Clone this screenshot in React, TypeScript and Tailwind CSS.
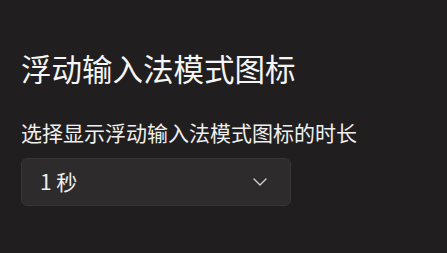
import { ChevronDown } from "lucide-react";

export default function App() {
  return (
    <div
      className="w-[447px] h-[253px] bg-[#201e1f] text-white pl-[21px] pt-[48px]"
      style={{ fontFamily: '"Noto Sans CJK SC", "Noto Sans", sans-serif' }}
    >
      <h1 className="text-[30.5px] leading-[40px] font-normal text-[#f5f5f5]">浮动输入法模式图标</h1>
      <p className="mt-[30px] text-[21px] leading-[28px] text-[#f0f0f0]">选择显示浮动输入法模式图标的时长</p>
      <button className="mt-[12px] w-[270px] h-[48px] flex items-center justify-between pl-[18px] pr-[18px] rounded-[6px] bg-[#2d2b2c] border border-[#363435] text-[21px] text-[#f0f0f0]">
        <span>1 秒</span>
        <ChevronDown className="w-[24px] h-[24px] text-[#d0d0d0]" strokeWidth={1.4} />
      </button>
    </div>
  );
}
